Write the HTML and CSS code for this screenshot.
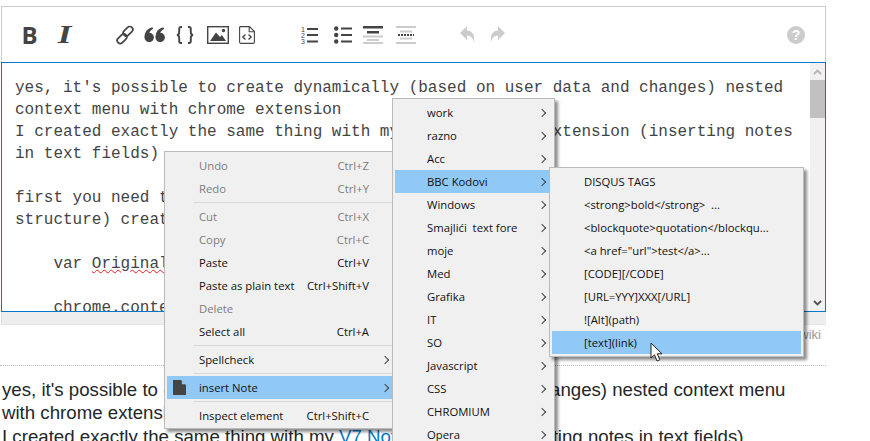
FILE: index.html
```html
<!DOCTYPE html>
<html>
	<head>
		<meta charset="UTF-8">
		<title>Answer editor</title>
		<link rel="stylesheet" href="styles.css">
	</head>
	<body>
		<div class="page">
			<div class="editor">
				<div class="toolbar">
					<div class="group">
						<span class="btn w35 bold-btn">B</span>
						<span class="btn w35 italic-btn">I</span>
					</div>
					<div class="group group-links">
						<span class="btn w30">
							<svg width="20" height="20" viewBox="0 0 20 20" fill="none" stroke="#444" stroke-width="1.7"><rect x="10" y="0.8" width="6" height="11" rx="3" transform="rotate(45 13 6.3)"/><rect x="4" y="8.2" width="6" height="11" rx="3" transform="rotate(45 7 13.7)"/></svg>
						</span>
						<span class="btn w30">
							<svg width="22" height="18" viewBox="0 0 22 18" fill="#444"><circle cx="5.2" cy="11.5" r="4.7"/><path d="M0.6 11C0.6 6 3.5 2 8.5 1.2L9 3C6.5 4 5.2 6 5.2 8Z"/><circle cx="16.2" cy="11.5" r="4.7"/><path d="M11.6 11C11.6 6 14.5 2 19.5 1.2L20 3C17.5 4 16.2 6 16.2 8Z"/></svg>
						</span>
						<span class="btn w30">
							<svg width="18" height="18" viewBox="0 0 18 18" fill="none" stroke="#444" stroke-width="1.9"><path d="M6 1H5C3.6 1 3.2 1.8 3.2 3V6.5C3.2 7.8 2.6 8.7 1 9C2.6 9.3 3.2 10.2 3.2 11.5V15C3.2 16.2 3.6 17 5 17H6"/><path d="M12 1H13C14.4 1 14.8 1.8 14.8 3V6.5C14.8 7.8 15.4 8.7 17 9C15.4 9.3 14.8 10.2 14.8 11.5V15C14.8 16.2 14.4 17 13 17H12"/></svg>
						</span>
						<span class="btn w36">
							<svg width="22" height="18" viewBox="0 0 22 18"><rect x="0.7" y="0.7" width="20.6" height="16.6" fill="none" stroke="#444" stroke-width="1.4"/><path d="M3 15L9 6.5L13 11L15 9L19 15Z" fill="#444"/><circle cx="16.5" cy="4.5" r="1.7" fill="#444"/></svg>
						</span>
						<span class="btn w22">
							<svg width="16" height="18" viewBox="0 0 16 18" fill="none" stroke="#444" stroke-width="1.1"><path d="M1.5 0.6H10.5L15.4 5.5V16C15.4 16.8 15 17.4 14 17.4H2C1 17.4 0.6 16.8 0.6 16V1.5C0.6 1 1 0.6 1.5 0.6Z"/><path d="M10.2 0.8V5.8H15.2"/><path d="M6.5 8.5L3.8 11L6.5 13.5M9.5 8.5L12.2 11L9.5 13.5" stroke-width="1.3"/></svg>
						</span>
					</div>
					<div class="group group-lists">
						<span class="btn w30">
							<svg width="18" height="18" viewBox="0 0 18 18" fill="#444"><text class="num" x="0" y="5.5">1</text><text class="num" x="0" y="11.5">2</text><text class="num" x="0" y="17.5">3</text><rect x="6" y="2" width="11" height="2"/><rect x="6" y="8" width="11" height="2"/><rect x="6" y="14.500" width="11" height="2"/></svg>
						</span>
						<span class="btn w36">
							<svg width="18" height="18" viewBox="0 0 18 18" fill="#444"><circle cx="2.200" cy="2.500" r="2.200"/><circle cx="2.200" cy="9" r="2.200"/><circle cx="2.200" cy="15.500" r="2.200"/><rect x="7" y="1.500" width="11" height="2"/><rect x="7" y="8" width="11" height="2"/><rect x="7" y="14.500" width="11" height="2"/></svg>
						</span>
						<span class="btn w24">
							<svg width="20" height="18" viewBox="0 0 20 18"><rect y="0" width="20" height="2.500" fill="#444"/><rect x="4" y="5" width="12" height="2.500" fill="#444"/><rect y="9.500" width="20" height="2" fill="#ccc"/><rect x="4" y="13" width="12" height="2" fill="#ccc"/><rect y="16" width="20" height="2" fill="#ccc"/></svg>
						</span>
						<span class="btn w42">
							<svg width="20" height="18" viewBox="0 0 20 18"><rect y="0" width="20" height="2" fill="#ccc"/><rect x="4" y="4.500" width="12" height="2" fill="#ccc"/><path d="M2 9H18" stroke="#444" stroke-width="2" stroke-dasharray="2 1"/><rect x="4" y="11.500" width="12" height="2" fill="#ccc"/><rect y="16" width="20" height="2" fill="#ccc"/></svg>
						</span>
					</div>
					<div class="group group-history">
						<span class="btn w30">
							<svg width="15" height="17" viewBox="0 0 15 17" fill="#ccc"><path d="M7 0V4.500C12 4.700 15 8 14 16.500C13 11.500 10.500 9.800 7 9.800V14L0 7Z"/></svg>
						</span>
						<span class="btn w30">
							<svg width="15" height="17" viewBox="0 0 15 17" fill="#ccc"><path d="M8 0V4.500C3 4.700 0 8 1 16.500C2 11.500 4.500 9.800 8 9.800V14L15 7Z"/></svg>
						</span>
					</div>
					<span class="btn w30 help-btn"><span class="help-mark">?</span></span>
				</div>

				<div class="input-box">
					<div class="input-text">yes, it's possible to create dynamically (based on user data and changes) nested
context menu with chrome extension
I created exactly the same thing with my [V7 Notes][1] extension (inserting notes
in text fields)

first you need to
structure) create

    var <span class="misspelt">Original</span>

    chrome.contextMenus</div>
					<div class="scrollbar">
						<span class="scroll-arrow">
							<svg width="9" height="6" viewBox="0 0 9 6" fill="none" stroke="#b5b5b5" stroke-width="1.800"><path d="M1 5L4.500 1.500L8 5"/></svg>
						</span>
						<span class="scroll-thumb"></span>
						<span class="scroll-rest"></span>
						<span class="scroll-arrow">
							<svg width="9" height="6" viewBox="0 0 9 6" fill="none" stroke="#505050" stroke-width="1.800"><path d="M1 1L4.500 4.500L8 1"/></svg>
						</span>
					</div>
				</div>
				<div class="grip"></div>
			</div>

			<div class="post-meta">wiki</div>

			<div class="preview">
				yes, it's possible to create dynamically (based on user data and changes) nested context menu with chrome extension<br>
				I created exactly the same thing with my <a class="preview-link">V7 Notes</a> extension (inserting notes in text fields)
			</div>

			<ul class="menu menu-main">
				<li class="item off"><span class="gutter"></span><span class="label">Undo</span><span class="keys">Ctrl+Z</span></li>
				<li class="item off"><span class="gutter"></span><span class="label">Redo</span><span class="keys">Ctrl+Y</span></li>
				<li class="sep"></li>
				<li class="item off"><span class="gutter"></span><span class="label">Cut</span><span class="keys">Ctrl+X</span></li>
				<li class="item off"><span class="gutter"></span><span class="label">Copy</span><span class="keys">Ctrl+C</span></li>
				<li class="item"><span class="gutter"></span><span class="label">Paste</span><span class="keys">Ctrl+V</span></li>
				<li class="item"><span class="gutter"></span><span class="label">Paste as plain text</span><span class="keys">Ctrl+Shift+V</span></li>
				<li class="item off"><span class="gutter"></span><span class="label">Delete</span></li>
				<li class="item"><span class="gutter"></span><span class="label">Select all</span><span class="keys">Ctrl+A</span></li>
				<li class="sep"></li>
				<li class="item sub"><span class="gutter"></span><span class="label">Spellcheck</span></li>
				<li class="sep"></li>
				<li class="item sub active"><span class="gutter">
					<svg width="13" height="15" viewBox="0 0 13 15" fill="#444"><path d="M0 0H8L13 5V15H0Z"/><path d="M8.800 0L13 4.200H8.800Z" fill="#8fc5f5"/></svg>
				</span><span class="label">insert Note</span></li>
				<li class="sep"></li>
				<li class="item"><span class="gutter"></span><span class="label">Inspect element</span><span class="keys">Ctrl+Shift+C</span></li>
			</ul>

			<ul class="menu menu-notes">
				<li class="item sub"><span class="gutter"></span><span class="label">work</span></li>
				<li class="item sub"><span class="gutter"></span><span class="label">razno</span></li>
				<li class="item sub"><span class="gutter"></span><span class="label">Acc</span></li>
				<li class="item sub active"><span class="gutter"></span><span class="label">BBC Kodovi</span></li>
				<li class="item sub"><span class="gutter"></span><span class="label">Windows</span></li>
				<li class="item sub"><span class="gutter"></span><span class="label">Smajlići&nbsp; text fore</span></li>
				<li class="item sub"><span class="gutter"></span><span class="label">moje</span></li>
				<li class="item sub"><span class="gutter"></span><span class="label">Med</span></li>
				<li class="item sub"><span class="gutter"></span><span class="label">Grafika</span></li>
				<li class="item sub"><span class="gutter"></span><span class="label">IT</span></li>
				<li class="item sub"><span class="gutter"></span><span class="label">SO</span></li>
				<li class="item sub"><span class="gutter"></span><span class="label">Javascript</span></li>
				<li class="item sub"><span class="gutter"></span><span class="label">CSS</span></li>
				<li class="item sub"><span class="gutter"></span><span class="label">CHROMIUM</span></li>
				<li class="item sub"><span class="gutter"></span><span class="label">Opera</span></li>
			</ul>

			<ul class="menu menu-tags">
				<li class="item"><span class="gutter"></span><span class="label">DISQUS TAGS</span></li>
				<li class="item"><span class="gutter"></span><span class="label">&lt;strong&gt;bold&lt;/strong&gt;&nbsp; ...</span></li>
				<li class="item"><span class="gutter"></span><span class="label">&lt;blockquote&gt;quotation&lt;/blockqu...</span></li>
				<li class="item"><span class="gutter"></span><span class="label">&lt;a href="url"&gt;test&lt;/a&gt;...</span></li>
				<li class="item"><span class="gutter"></span><span class="label">[CODE][/CODE]</span></li>
				<li class="item"><span class="gutter"></span><span class="label">[URL=YYY]XXX[/URL]</span></li>
				<li class="item"><span class="gutter"></span><span class="label">![Alt](path)</span></li>
				<li class="item active"><span class="gutter"></span><span class="label">[text](link)</span></li>
			</ul>

			<svg class="pointer" width="14" height="21" viewBox="0 0 14 21"><path d="M1 1V16L4.500 12.800L7 19L9.800 17.800L7.300 11.800H12Z" fill="#fff" stroke="#222" stroke-width="1"/></svg>
		</div>
	</body>
</html>
```

FILE: styles.css
```css
* {
	margin: 0;
	padding: 0;
	box-sizing: border-box;
}
ul, li {
	list-style: none;
}

body {
	background: #fff;
	font-family: "Liberation Sans", Arial, sans-serif;
}

.page {
	width: 870px;
	height: 441px;
	padding-top: 6px;
	overflow: hidden;
	position: relative;
}

.editor {
	width: 825px;
	margin-left: 1px;
}

/* toolbar */
.toolbar {
	height: 56px;
	display: flex;
	align-items: center;
	border: 1px solid #ccc;
	border-bottom: none;
	padding: 0 14px 0 10px;
}
.group {
	display: flex;
	align-items: center;
}
.group-links {
	margin-left: 28px;
}
.group-lists {
	margin-left: 37px;
}
.group-history {
	margin-left: 25px;
}
.btn {
	height: 20px;
	display: flex;
	align-items: center;
	justify-content: center;
	color: #444;
}
.w22 { width: 22px; }
.w24 { width: 24px; }
.w30 { width: 30px; }
.w35 { width: 35px; }
.w36 { width: 36px; }
.w42 { width: 42px; }

.bold-btn {
	font: bold 24px "Open Sans", sans-serif;
}
.italic-btn {
	font: italic bold 26px "Liberation Serif", serif;
	transform: scaleX(1.35);
}
.num {
	font: 7px "Liberation Sans", sans-serif;
}
.help-btn {
	margin-left: auto;
}
.help-mark {
	width: 18px;
	height: 18px;
	border-radius: 50%;
	background: #ccc;
	color: #fff;
	font: bold 14px/18px "Liberation Sans", sans-serif;
	text-align: center;
}

/* text input */
.input-box {
	height: 250px;
	display: flex;
	border: 1px solid #0077cc;
	overflow: hidden;
}
.input-text {
	flex: 1;
	padding: 14px 0 0 13px;
	font: 16px/22px "Liberation Mono", monospace;
	color: #444;
	white-space: pre;
	overflow: hidden;
}
.misspelt {
	text-decoration: underline wavy #e02020 1px;
}
.scrollbar {
	width: 15px;
	display: flex;
	flex-direction: column;
	background: #f1f1f1;
}
.scroll-arrow {
	height: 17px;
	display: flex;
	align-items: center;
	justify-content: center;
}
.scroll-thumb {
	height: 38px;
	background: #c1c1c1;
}
.scroll-rest {
	flex: 1;
}
.grip {
	width: 825px;
	height: 13px;
	background: #eee;
	border-left: 1px solid #ddd;
	border-bottom: 1px solid #e4e4e4;
}

.post-meta {
	width: 821px;
	margin-top: 3px;
	font-size: 13px;
	line-height: 14px;
	color: #999;
	text-align: right;
}

.preview {
	width: 826px;
	margin-top: 23px;
	padding: 12px 10px 0 2px;
	border-top: 1px dotted #bbb;
	font-size: 18.67px;
	line-height: 23.4px;
	color: #242729;
}
.preview-link {
	color: #0077cc;
}

/* context menus */
.menu {
	position: absolute;
	background: #f0f0f0;
	border: 1px solid #bbb;
	padding: 2px 2px 1px;
	box-shadow: 3px 3px 3px rgba(0, 0, 0, 0.45);
	font: 11.3px "Open Sans", sans-serif;
	color: #111;
}
.menu-main {
	top: 151px;
	left: 164px;
	width: 232px;
}
.menu-main .item {
	padding-right: 24px;
}
.menu-main .sub::after {
	right: 5px;
}
.menu-notes {
	top: 98px;
	left: 392px;
	width: 163px;
}
.menu-tags {
	top: 167px;
	left: 549px;
	width: 255px;
	padding-bottom: 2px;
}
.item {
	height: 23px;
	display: flex;
	align-items: center;
	padding-right: 21px;
	position: relative;
}
.item.off {
	color: #7d7d7d;
}
.item.active {
	background: #90c8f6;
}
.gutter {
	width: 32px;
	height: 23px;
	display: flex;
	align-items: center;
	padding-left: 6px;
	flex: none;
}
.label {
	flex: 1;
	white-space: nowrap;
}
.keys {
	white-space: nowrap;
}
.sub::after {
	content: "";
	position: absolute;
	right: 7px;
	top: 9px;
	width: 5px;
	height: 5px;
	border-top: 1px solid #444;
	border-right: 1px solid #444;
	transform: rotate(45deg);
}
.sep {
	height: 1px;
	margin: 2px 0 2px 27px;
	background: #d7d7d7;
}

.pointer {
	position: absolute;
	left: 650px;
	top: 342px;
}
```
